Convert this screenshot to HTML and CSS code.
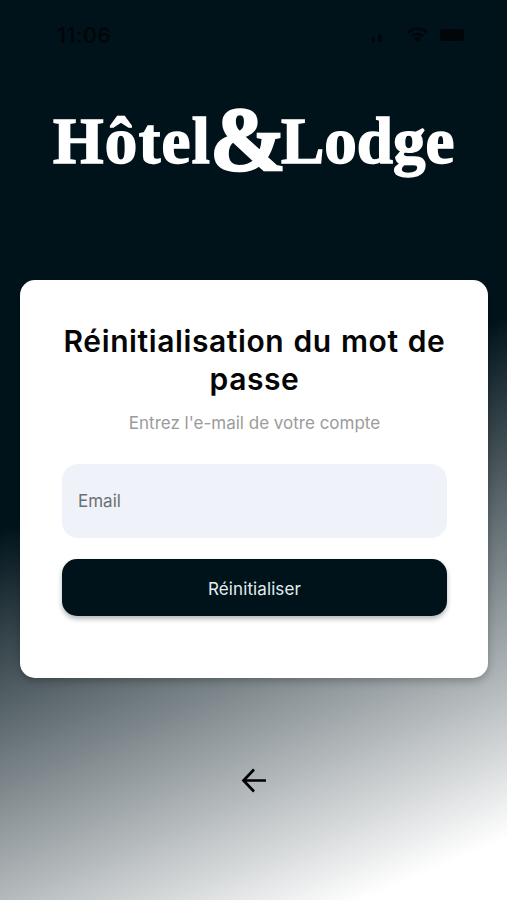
FILE: index.html
```html
<!DOCTYPE html>
<html lang="fr">
  <head>
    <meta charset="UTF-8" />
    <meta name="viewport" content="width=device-width, initial-scale=1.0" />
    <title>Hôtel&amp;Lodge</title>
    <link rel="stylesheet" href="styles.css">
  </head>
  <body>
    <div class="screen">
      <div class="status">
        <span class="time">11:06</span>
        <svg class="status-icons" width="104" height="18" viewBox="0 0 104 18">
          <rect x="2" y="11" width="3" height="5" rx="1" />
          <rect x="8" y="8" width="3.500" height="8" rx="1" />
          <g class="wifi">
            <path d="M38 6.500a14 14 0 0 1 19 0" />
            <path d="M42 10a8.500 8.500 0 0 1 11 0" />
          </g>
          <path d="M44 12.500a5 5 0 0 1 7 0L47.500 16z" />
          <rect x="70" y="3" width="24" height="12" rx="3" />
        </svg>
      </div>

      <h1 class="logo"><span class="word first">Hôtel</span><span class="amp">&amp;</span><span class="word last">Lodge</span></h1>

      <form class="card">
        <h2>Réinitialisation du mot de passe</h2>
        <p>Entrez l'e-mail de votre compte</p>
        <input type="email" placeholder="Email" />
        <button type="button">Réinitialiser</button>
      </form>

      <a href="javascript:;" class="back">
        <svg width="28" height="28" viewBox="0 0 28 28">
          <path d="M26 14.500H3M14 3.500L3.500 14.500L14 25.500" />
        </svg>
      </a>
    </div>
  </body>
</html>
```
FILE: styles.css
```css
* {
  margin: 0;
  padding: 0;
  box-sizing: border-box;
}
body {
  font-family: "Inter", sans-serif;
}
.screen {
  display: flex;
  flex-direction: column;
  height: 900px;
  padding: 0 19px 0 20px;
  overflow: hidden;
  background: linear-gradient(157deg, #00131b 47.5%, #fff 94.5%);
}
.status {
  display: flex;
  flex: none;
  justify-content: space-between;
  align-items: center;
  height: 70px;
  padding: 0 14px 0 37px;
  color: #000609;
}
.time {
  font-size: 21px;
  font-weight: 600;
  letter-spacing: 0.5px;
}
.status-icons {
  fill: #000609;
}
.status-icons .wifi {
  fill: none;
  stroke: #000609;
  stroke-width: 2.5;
}
.logo {
  display: flex;
  flex: none;
  align-items: baseline;
  height: 210px;
  padding: 13px 0 0 33px;
  color: #fff;
  font-family: "Liberation Serif", serif;
  font-weight: bold;
  line-height: 100px;
  white-space: nowrap;
}
.logo .word {
  font-size: 65px;
  -webkit-text-stroke: 1.5px #fff;
}
.logo .first {
  width: 159px;
  letter-spacing: 1.3px;
}
.logo .amp {
  position: relative;
  top: 7px;
  left: -2px;
  width: 69px;
  font-size: 91px;
  letter-spacing: -4px;
  -webkit-text-stroke: 2.5px #fff;
}
.card {
  display: flex;
  flex: none;
  flex-direction: column;
  height: 398px;
  padding: 42px 41px 0 42px;
  border-radius: 15px;
  background: #fff;
  box-shadow: 0 3px 8px rgba(0, 0, 0, 0.25);
  text-align: center;
}
.card h2 {
  color: #050505;
  font-size: 30px;
  font-weight: 600;
  line-height: 38px;
  letter-spacing: 0.6px;
  word-spacing: 1px;
}
.card p {
  margin-top: 14px;
  color: #9b9b9b;
  font-size: 17px;
  line-height: 22px;
}
.card input {
  flex: none;
  height: 74px;
  margin-top: 30px;
  padding: 0 16px;
  border: none;
  border-radius: 16px;
  background: #eff2f8;
  font-family: inherit;
  font-size: 17px;
}
.card input::placeholder {
  color: #6b7075;
}
.card button {
  flex: none;
  height: 57px;
  margin-top: 21px;
  padding-top: 2px;
  border: none;
  border-radius: 15px;
  background: #00131a;
  box-shadow: 0 3px 5px rgba(0, 19, 26, 0.3);
  color: #e3edf0;
  font-family: inherit;
  font-size: 17px;
  letter-spacing: 0.1px;
}
.back {
  align-self: center;
  height: 28px;
  margin-top: 88px;
}
.back path {
  fill: none;
  stroke: #000;
  stroke-width: 2.7;
}
```
